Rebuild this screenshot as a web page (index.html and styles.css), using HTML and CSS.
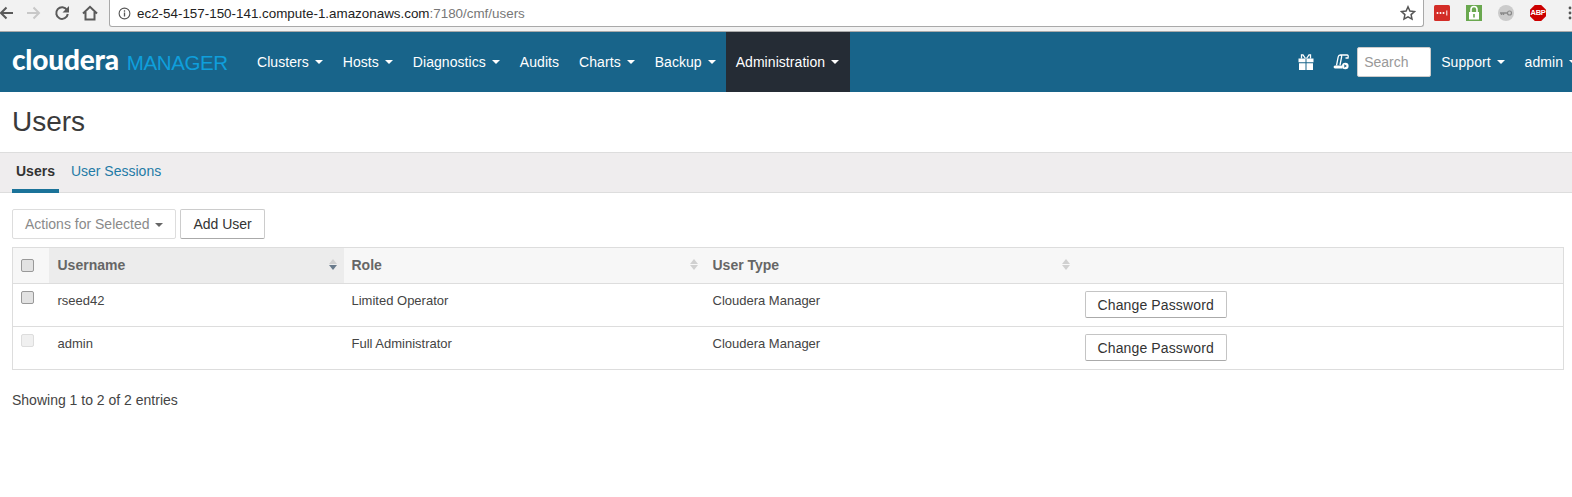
FILE: index.html
```html
<!DOCTYPE html>
<html lang="en">
<head>
    <meta charset="UTF-8">
    <meta name="viewport" content="width=device-width, initial-scale=1.0">
    <title>Users - Cloudera Manager</title>
    <link rel="stylesheet" href="styles.css">
</head>
<body>
    <div class="chrome">
        <div class="chrome-nav">
            <svg class="chrome-icon" viewBox="0 0 16 16"><path d="M15 8H3M8.500 2.500L3 8l5.500 5.500" fill="none" stroke="#5a5a5a" stroke-width="2"/></svg>
            <svg class="chrome-icon" viewBox="0 0 16 16"><path d="M1 8h12M7.500 2.500L13 8l-5.500 5.500" fill="none" stroke="#c8c8c8" stroke-width="2"/></svg>
            <svg class="chrome-icon" viewBox="0 0 16 16"><path d="M13 5A5.800 5.800 0 1 0 13.800 9" fill="none" stroke="#5a5a5a" stroke-width="2"/><path d="M15 1v6.500H8.500z" fill="#5a5a5a"/></svg>
            <svg class="chrome-icon" viewBox="0 0 16 16"><path d="M1 8.500L8 1.800l7 6.700M3.500 7v7.500h9V7" fill="none" stroke="#5a5a5a" stroke-width="2"/></svg>
        </div>
        <div class="omnibox">
            <svg class="info-icon" viewBox="0 0 14 14"><circle cx="7" cy="7" r="5.800" fill="none" stroke="#555" stroke-width="1.200"/><path d="M7 6v4.200M7 3.600v1.400" stroke="#555" stroke-width="1.400"/></svg>
            <span class="url">ec2-54-157-150-141.compute-1.amazonaws.com<span class="url-dim">:7180/cmf/users</span></span>
            <svg class="star-icon" viewBox="0 0 16 16"><path d="M8 1.800l1.900 4.200 4.600.5-3.400 3.100.9 4.500-4-2.300-4 2.300.9-4.500L1.500 6.500l4.600-.5z" fill="none" stroke="#555" stroke-width="1.500"/></svg>
        </div>
        <div class="extensions">
            <svg class="ext" viewBox="0 0 16 16"><rect width="16" height="16" rx="1.500" fill="#d32d27"/><circle cx="3.500" cy="8" r="1" fill="#fff"/><circle cx="6.500" cy="8" r="1" fill="#fff"/><circle cx="9.500" cy="8" r="1" fill="#fff"/><path d="M12.800 5.500v5" stroke="#fff"/></svg>
            <svg class="ext" viewBox="0 0 16 16"><rect width="16" height="16" fill="#6aa84f"/><path d="M5 7.500V4.500a3 3 0 0 1 6 0v3" fill="none" stroke="#fff" stroke-width="1.600"/><rect x="3" y="7" width="10" height="7.500" fill="#fff"/><rect x="7.200" y="9" width="1.600" height="3.500" fill="#6aa84f"/></svg>
            <svg class="ext" viewBox="0 0 16 16"><circle cx="8" cy="8" r="8" fill="#cbcbcb"/><circle cx="11.500" cy="8" r="2" fill="none" stroke="#8a8a8a" stroke-width="1.200"/><path d="M2 8h7.500M3.500 8v2M5.500 8v2" stroke="#8a8a8a" stroke-width="1.400"/></svg>
            <span class="abp">ABP</span>
            <svg class="menu-dots" viewBox="0 0 4 16"><circle cx="2" cy="3" r="1.400"/><circle cx="2" cy="8" r="1.400"/><circle cx="2" cy="13" r="1.400"/></svg>
        </div>
    </div>

    <header class="navbar">
        <div class="brand"><span class="brand-name">cloudera</span><span class="brand-product">MANAGER</span></div>
        <nav class="nav-main">
            <a class="nav-item">Clusters <i class="caret"></i></a>
            <a class="nav-item">Hosts <i class="caret"></i></a>
            <a class="nav-item">Diagnostics <i class="caret"></i></a>
            <a class="nav-item">Audits</a>
            <a class="nav-item">Charts <i class="caret"></i></a>
            <a class="nav-item">Backup <i class="caret"></i></a>
            <a class="nav-item active">Administration <i class="caret"></i></a>
        </nav>
        <div class="nav-right">
            <svg class="nav-icon gift" viewBox="0 0 16 16"><path d="M.5 4.500h7v3.800h-7zM8.500 4.500h7v3.800h-7zM1 9.300h6.500V16H1zM8.500 9.300H15V16H8.500z" fill="#fff"/><path d="M7.500 4.500L5 .8H3.500v3.700M8.500 4.500L11 .8h1.500v3.700" fill="none" stroke="#fff" stroke-width="1.300"/></svg>
            <svg class="nav-icon scroll" viewBox="0 0 16 16"><path d="M3.500 11.500L5.200 3c.2-1.200 1-2 2-2H14c1.200 0 1.500 1 1 3h-2.500M7.200 1c1 0 1.600 1 1.400 2L7 11" fill="none" stroke="#fff" stroke-width="1.300"/><path d="M2 11.500h7.500v3H2c-1.800 0-1.800-3 0-3z" fill="#fff"/><circle cx="12.300" cy="12" r="3.300" fill="#fff"/><path d="M11.300 10.300v3.400l2.500-1.700z" fill="#18648a"/></svg>
            <input class="nav-search" type="text" placeholder="Search">
            <a class="nav-item">Support <i class="caret"></i></a>
            <a class="nav-item">admin <i class="caret"></i></a>
        </div>
    </header>

    <h1 class="page-title">Users</h1>

    <div class="tabs">
        <a class="tab active">Users</a>
        <a class="tab">User Sessions</a>
    </div>

    <div class="content">
        <div class="toolbar">
            <button class="btn btn-disabled" type="button">Actions for Selected <i class="caret caret-grey"></i></button>
            <button class="btn" type="button">Add User</button>
        </div>

        <table class="users-table">
            <colgroup>
                <col class="col-check"><col class="col-name"><col class="col-role"><col class="col-type"><col>
            </colgroup>
            <thead>
                <tr>
                    <th><span class="check"></span></th>
                    <th class="sorted"><div class="th-inner">Username <span class="sort sort-desc"></span></div></th>
                    <th><div class="th-inner">Role <span class="sort"></span></div></th>
                    <th><div class="th-inner">User Type <span class="sort"></span></div></th>
                    <th></th>
                </tr>
            </thead>
            <tbody>
                <tr>
                    <td><span class="check"></span></td>
                    <td class="cell-name">rseed42</td>
                    <td>Limited Operator</td>
                    <td>Cloudera Manager</td>
                    <td class="cell-action"><button class="btn btn-row" type="button">Change Password</button></td>
                </tr>
                <tr>
                    <td><span class="check check-off"></span></td>
                    <td class="cell-name">admin</td>
                    <td>Full Administrator</td>
                    <td>Cloudera Manager</td>
                    <td class="cell-action"><button class="btn btn-row" type="button">Change Password</button></td>
                </tr>
            </tbody>
        </table>

        <p class="table-info">Showing 1 to 2 of 2 entries</p>
    </div>
</body>
</html>
```

FILE: styles.css
```css
* { box-sizing: border-box; }
html, body { height: 100%; }
body {
    margin: 0;
    overflow: hidden;
    font-family: "Liberation Sans", Arial, sans-serif;
    font-size: 13px;
    color: #444;
    background: #fff;
}

/* browser bar */
.chrome {
    display: flex;
    align-items: flex-start;
    height: 32px;
    background: #f2f2f2;
    border-bottom: 1px solid #a9a9a9;
}
.chrome-nav {
    display: flex;
    align-items: center;
    gap: 12px;
    width: 113px;
    height: 26px;
    margin-left: -2px;
    flex-shrink: 0;
}
.chrome-icon { width: 16px; height: 16px; flex-shrink: 0; }
.omnibox {
    display: flex;
    align-items: center;
    width: 1320px;
    height: 27px;
    padding: 0 7px 0 8px;
    background: #fff;
    border: 1px solid #a9a9a9;
    border-top: 0;
    border-radius: 0 0 3px 3px;
    margin-left: -2px;
}
.info-icon { width: 13px; height: 13px; margin-right: 6px; }
.url { flex: 1; font-size: 13.400px; color: #222; }
.url-dim { color: #777; }
.star-icon { width: 16px; height: 16px; }
.extensions {
    display: flex;
    align-items: center;
    height: 26px;
    padding-left: 10px;
    gap: 16px;
}
.ext { width: 16px; height: 16px; }
.abp {
    width: 16px;
    height: 16px;
    background: #c00;
    clip-path: polygon(30% 0, 70% 0, 100% 30%, 100% 70%, 70% 100%, 30% 100%, 0 70%, 0 30%);
    color: #fff;
    font-size: 7.500px;
    font-weight: bold;
    letter-spacing: -0.3px;
    line-height: 16px;
    text-align: center;
}
.menu-dots { width: 4px; height: 16px; margin-left: 6px; fill: #555; }

/* app navbar */
.navbar {
    display: flex;
    align-items: center;
    height: 60px;
    background: #18648a;
    color: #fff;
}
.brand {
    display: flex;
    align-items: baseline;
    width: 247px;
    padding-left: 12px;
    margin-bottom: 7px;
    white-space: nowrap;
    flex-shrink: 0;
}
.brand-name { font-family: Lato, sans-serif; font-size: 28px; font-weight: 900; letter-spacing: -0.2px; }
.brand-product { margin-left: 8px; font-size: 20.500px; color: #0f9fdc; letter-spacing: -0.4px; }
.nav-main { display: flex; height: 100%; }
.nav-item {
    display: flex;
    align-items: center;
    height: 100%;
    padding: 0 10px;
    font-size: 14px;
    letter-spacing: 0.06px;
    color: #fff;
    white-space: pre;
}
.nav-item.active { padding-right: 11px; background: #252c35; }
.caret {
    display: inline-block;
    width: 0;
    height: 0;
    margin-left: 2px;
    border-top: 4px solid #fff;
    border-left: 4px solid transparent;
    border-right: 4px solid transparent;
}
.caret-grey { border-top-color: #666; vertical-align: middle; }
.nav-right {
    display: flex;
    align-items: center;
    height: 100%;
    margin-left: auto;
    margin-right: -15px;
}
.nav-icon { width: 16px; height: 16px; }
.gift { margin-right: 19px; }
.scroll { margin-right: 8px; }
.nav-search {
    width: 74px;
    height: 30px;
    padding: 0 6px;
    font-family: inherit;
    font-size: 14px;
    border: 1px solid #ccc;
    border-radius: 2px;
}
.nav-search::placeholder { color: #999; }

/* heading and tabs */
.page-title {
    margin: 0;
    height: 60px;
    padding: 14px 12px 0;
    font-size: 28px;
    font-weight: normal;
    line-height: 32px;
    color: #3a3a3a;
}
.tabs {
    display: flex;
    height: 41px;
    padding-left: 12px;
    background: #efedee;
    border-top: 1px solid #ddd;
    border-bottom: 1px solid #ddd;
}
.tab {
    height: 40px;
    padding: 10px 4px 0;
    margin-right: 8px;
    font-size: 14px;
    line-height: 17px;
    color: #1f7ba6;
}
.tab.active {
    font-weight: bold;
    color: #333;
    border-bottom: 4px solid #1b7399;
}

/* users table */
.content { padding: 16px 8px 0 12px; }
.toolbar { display: flex; gap: 4px; margin-bottom: 8px; }
.btn {
    height: 30px;
    padding: 0 12px;
    font-family: inherit;
    font-size: 14px;
    color: #333;
    background: #fff;
    border: 1px solid #ccc;
    border-bottom-color: #aaa;
    border-radius: 2px;
}
.btn-disabled { color: #8a8a8a; border-color: #ddd; }
.btn-row {
    display: block;
    height: 27px;
    letter-spacing: 0.13px;
    border-color: #c4c4c4;
    border-bottom-color: #aaa;
}
.users-table {
    width: 100%;
    table-layout: fixed;
    border-collapse: collapse;
    border: 1px solid #ddd;
}
.col-check { width: 36px; }
.col-name { width: 295px; }
.col-role { width: 361px; }
.col-type { width: 372px; }
.users-table th {
    height: 36px;
    padding: 0 8px 2px;
    background: #f7f7f7;
    font-size: 14px;
    font-weight: bold;
    color: #666;
    text-align: left;
    border-bottom: 1px solid #ddd;
}
.users-table th.sorted { padding-left: 9px; background: #ececec; }
.th-inner { display: flex; align-items: center; justify-content: space-between; }
.users-table td {
    height: 43px;
    padding: 8px;
    font-size: 13px;
    line-height: 17px;
    vertical-align: top;
    border-top: 1px solid #ddd;
}
.users-table td.cell-name { padding-left: 9px; }
.users-table td.cell-action { padding: 7px 8px 8px; }
.users-table th:first-child, .users-table td:first-child { padding: 0 8px; }
.users-table th:first-child { padding-bottom: 1px; }
.users-table td:first-child { padding-top: 7px; }
.check {
    display: block;
    width: 13px;
    height: 13px;
    background: #e2e2e2;
    border: 1px solid #999;
    border-radius: 2px;
}
.check-off { background: #f0f0f0; border-color: #ddd; }

/* sort arrows, two triangles over each other */
.sort {
    position: relative;
    display: block;
    width: 8px;
    height: 11px;
    margin-right: -1px;
}
.sort::before, .sort::after {
    content: "";
    position: absolute;
    left: 0;
    border-left: 4px solid transparent;
    border-right: 4px solid transparent;
}
.sort::before { top: 0; border-bottom: 5px solid #d0d0d0; }
.sort::after { bottom: 0; border-top: 5px solid #d0d0d0; }
.sort-desc::after { border-top-color: #6a7b8c; }

.table-info { margin: 21px 0 0; font-size: 14px; line-height: 18px; color: #444; }
```
